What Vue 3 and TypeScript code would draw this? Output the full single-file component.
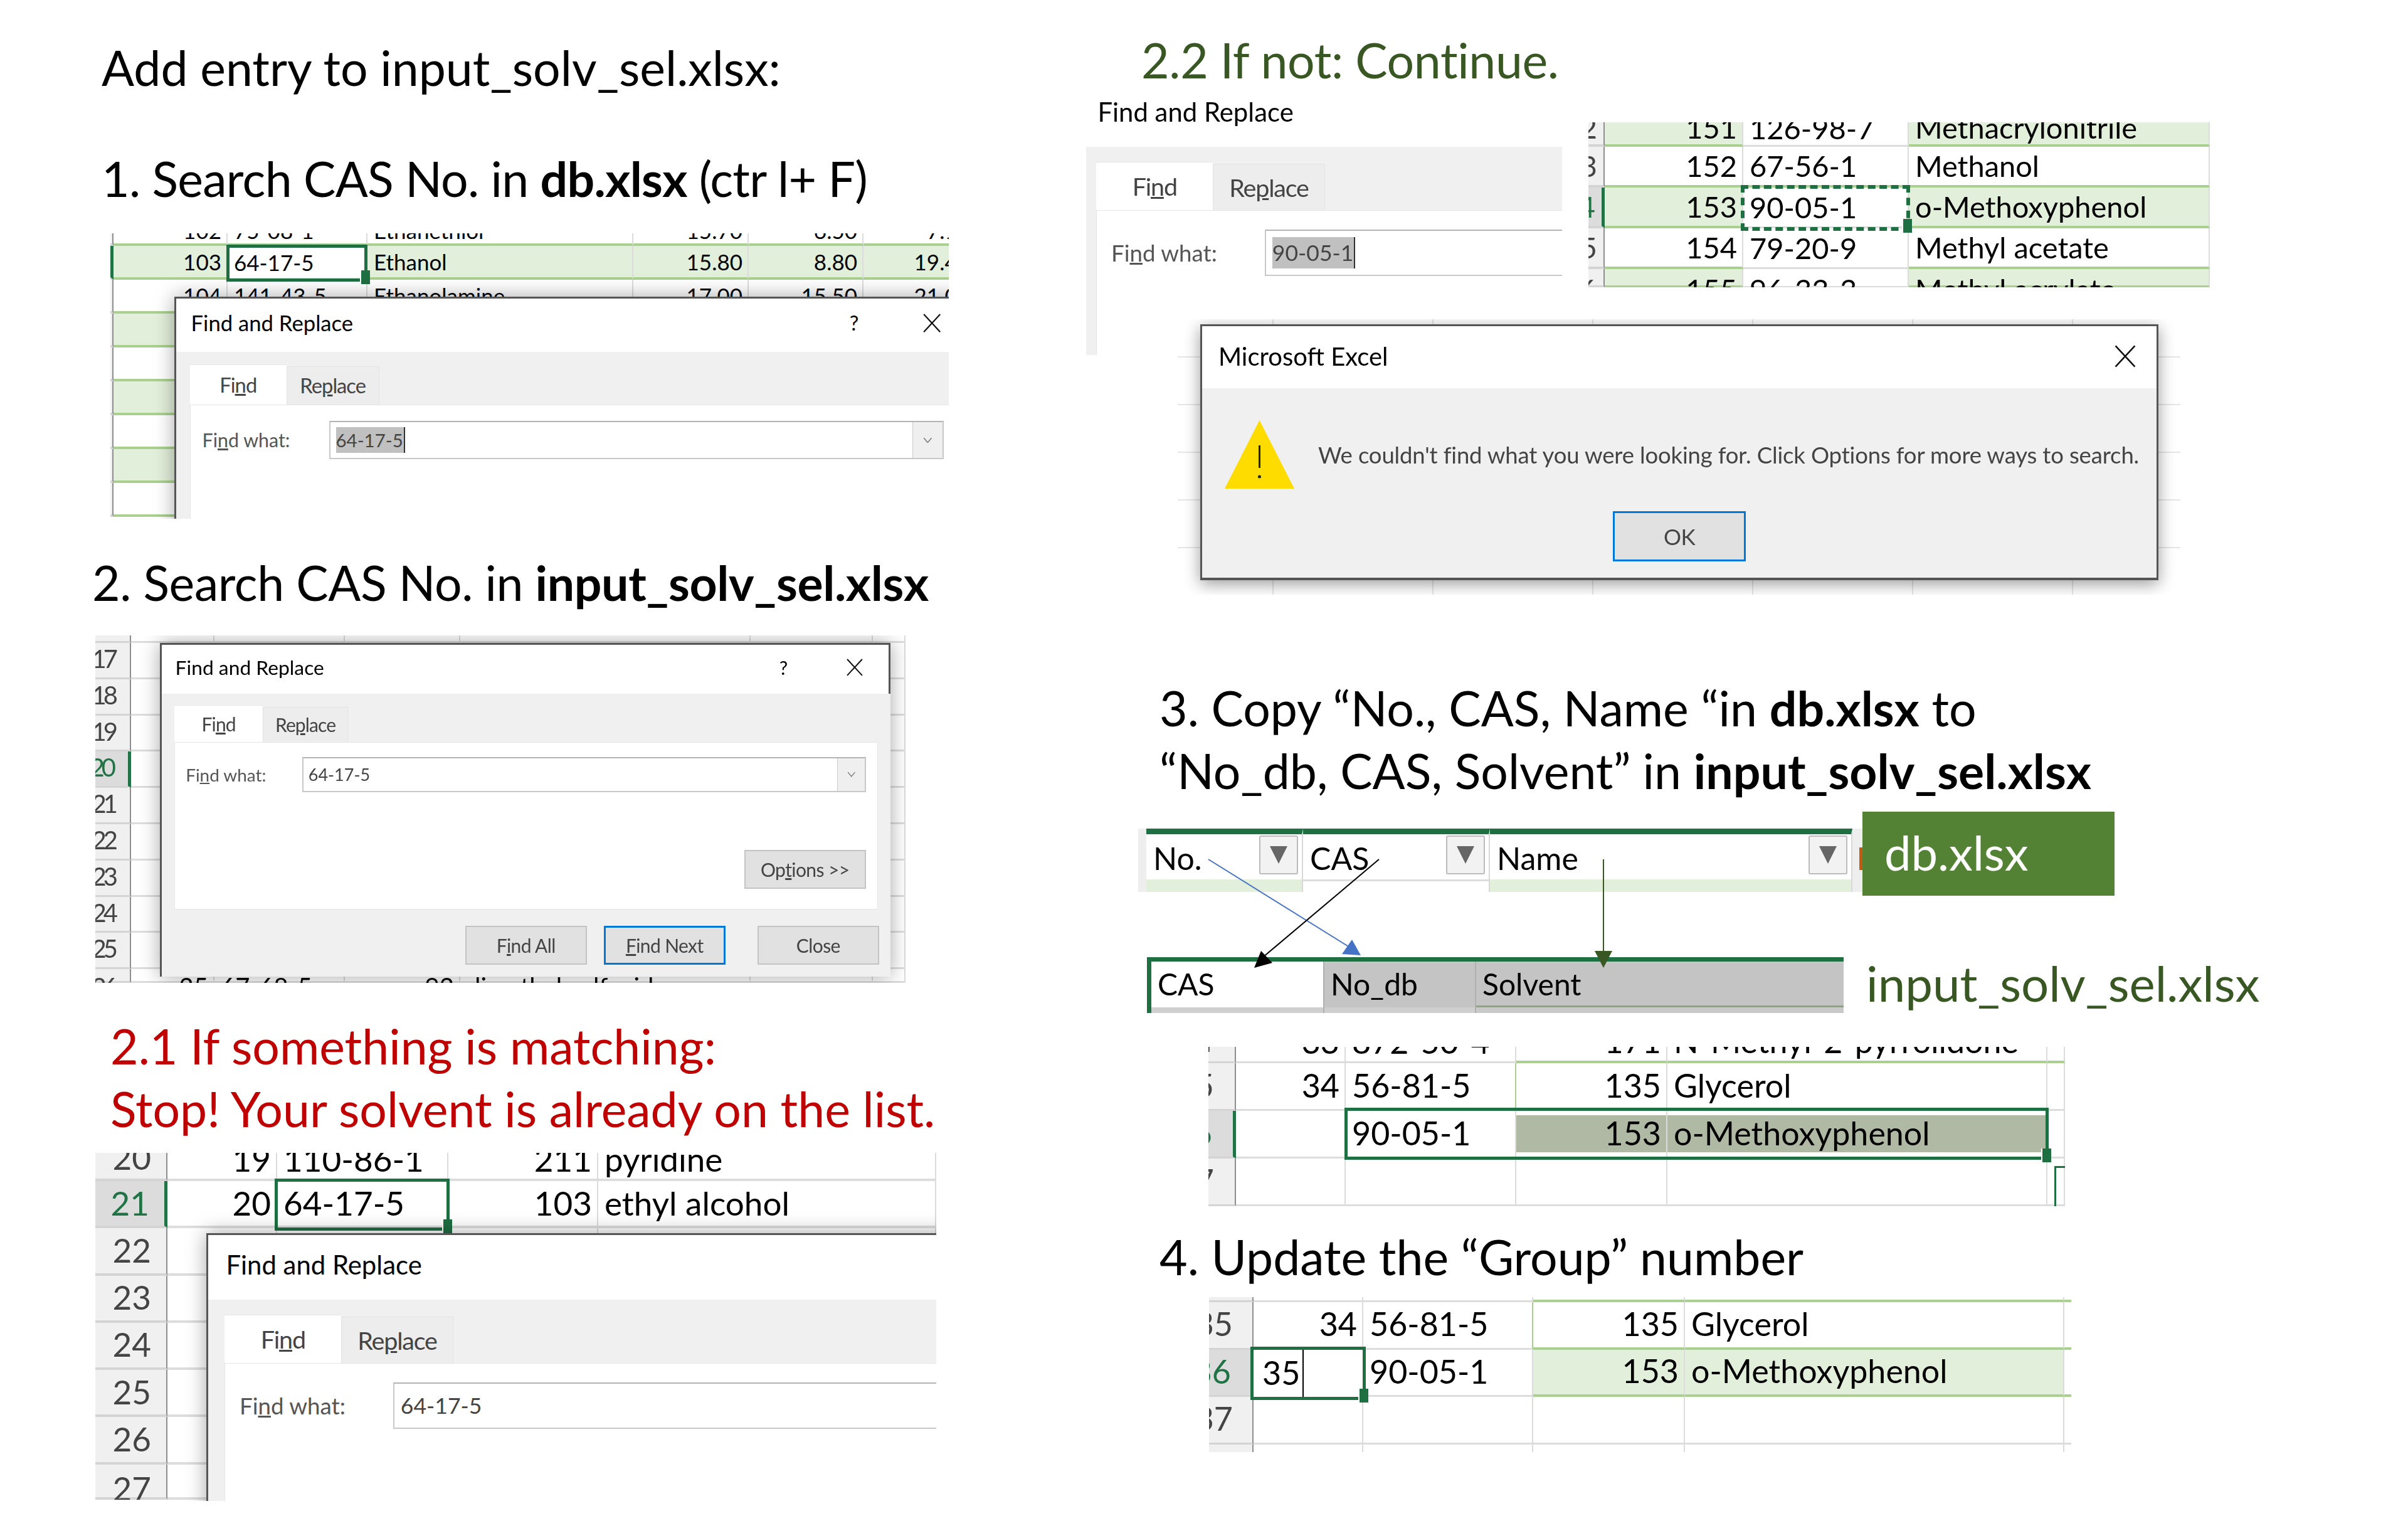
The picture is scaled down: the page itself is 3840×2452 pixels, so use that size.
<template>
  <main class="slide">
    <p class="title t-add">Add entry to input_solv_sel.xlsx:</p>
    <p class="title t-one">1. Search CAS No. in <b>db.xlsx</b> (ctr l+ F)</p>
    <p class="title t-two">2. Search CAS No. in <b>input_solv_sel.xlsx</b></p>
    <p class="title t-match">2.1 If something is matching:<br />Stop! Your solvent is already on the list.</p>
    <p class="title t-cont">2.2 If not: Continue.</p>
    <p class="title t-copy">
      3. Copy “No., CAS, Name “in <b>db.xlsx</b> to<br />“No_db, CAS, Solvent” in
      <b>input_solv_sel.xlsx</b>
    </p>
    <p class="title t-group">4. Update the “Group” number</p>

    <section v-for="s in sheets" :key="s.id" class="shot" :class="s.id">
      <div v-for="(r, i) in s.rows" :key="i" class="row" :class="r.cls">
        <div v-for="(c, j) in r.cells" :key="j" class="cell" :class="{ hdr: j === 0, right: c.right }">
          <span>{{ c.text }}</span>
        </div>
      </div>

      <div v-if="s.frame" class="frame">
        <span v-if="s.typed" class="typed">{{ s.typed }}</span>
      </div>
      <div v-if="s.id === 'h'" class="paste"></div>

      <div v-if="s.find" class="dialog">
        <header class="titlebar">
          <span class="name">Find and Replace</span>
          <span class="help">?</span>
          <svg class="close" viewBox="0 0 28 28"><path d="M2 1 26 27M26 1 2 27" /></svg>
        </header>
        <div class="tabs">
          <span class="tab on">Fi<u>n</u>d</span>
          <span class="tab">Re<u>p</u>lace</span>
        </div>
        <div class="panel">
          <div class="field">
            <label>Fi<u>n</u>d what:</label>
            <div class="input">
              <span class="value" :class="{ sel: s.find.selected }">{{ s.find.value }}</span>
              <span class="drop">
                <svg viewBox="0 0 12 8"><path d="M1 1 6 7 11 1" /></svg>
              </span>
            </div>
          </div>
          <button class="btn options">Op<u>t</u>ions &gt;&gt;</button>
        </div>
        <footer class="actions">
          <button class="btn">F<u>i</u>nd All</button>
          <button class="btn primary"><u>F</u>ind Next</button>
          <button class="btn last">Close</button>
        </footer>
      </div>
    </section>

    <section class="shot alert">
      <div class="alert-box">
        <header class="alert-bar">
          <span>Microsoft Excel</span>
          <svg class="close" viewBox="0 0 28 28"><path d="M2 1 26 27M26 1 2 27" /></svg>
        </header>
        <div class="alert-body">
          <div class="alert-msg">
            <svg class="warn" viewBox="0 0 111 109">
              <polygon points="55.5,0 111,109 0,109" fill="#ffdc00" />
              <path d="M55.5 40V76" stroke="#222" stroke-width="3" />
              <circle cx="55.5" cy="90" r="2.5" fill="#222" />
            </svg>
            <span>We couldn't find what you were looking for. Click Options for more ways to search.</span>
          </div>
          <button class="btn primary ok">OK</button>
        </div>
      </div>
    </section>

    <section class="shot headers">
      <div v-for="h in dbHeaders" :key="h" class="hcell">
        <span>{{ h }}</span>
        <i class="filter"><b></b></i>
      </div>
      <i class="sliver"></i>
    </section>
    <div class="db-tag">db.xlsx</div>

    <section class="shot target">
      <div v-for="h in inputHeaders" :key="h" class="tcell">{{ h }}</div>
    </section>
    <div class="input-tag">input_solv_sel.xlsx</div>

    <svg class="arrows" viewBox="0 0 3840 2452">
      <path d="M1927 1370 2152 1510" stroke="#4472c4" stroke-width="2" />
      <polygon points="2156,1498 2140,1521 2170,1523" fill="#4472c4" />
      <path d="M2199 1370 2014 1526" stroke="#000" stroke-width="2" />
      <polygon points="2011,1516 2000,1543 2029,1535" fill="#000" />
      <path d="M2557 1370V1520" stroke="#385723" stroke-width="2" />
      <polygon points="2543,1516 2571,1516 2557,1543" fill="#385723" />
    </svg>
  </main>
</template>

<script setup lang="ts">
interface Cell {
  text: string
  right: boolean
}

interface Row {
  cls: string
  cells: Cell[]
}

interface Sheet {
  id: string
  rows: Row[]
  frame?: boolean
  typed?: string
  find?: { value: string; selected: boolean }
}

// a leading ">" means right aligned, like numbers in Excel
const row = (cls: string, ...cells: string[]): Row => ({
  cls,
  cells: cells.map((c) => ({ text: c.replace(/^>/, ''), right: c.startsWith('>') })),
})

const blank = (cls: string, n: number, label = '') => row(cls, label ? '>' + label : '', ...Array(n).fill(''))

const sheets: Sheet[] = [
  {
    id: 'a',
    frame: true,
    find: { value: '64-17-5', selected: true },
    rows: [
      row('top', '', '>102', '75-08-1', 'Ethanethiol', '>15.70', '>6.50', '>7.10'),
      row('green skip on', '', '>103', '64-17-5', 'Ethanol', '>15.80', '>8.80', '>19.40'),
      row('', '', '>104', '141-43-5', 'Ethanolamine', '>17.00', '>15.50', '>21.00'),
      blank('green', 6),
      blank('', 6),
      blank('green', 6),
      blank('', 6),
      blank('green', 6),
      blank('', 6),
    ],
  },
  {
    id: 'b',
    find: { value: '64-17-5', selected: false },
    rows: [
      blank('top', 6),
      blank('', 6, '17'),
      blank('', 6, '18'),
      blank('', 6, '19'),
      blank('on', 6, '20'),
      blank('', 6, '21'),
      blank('', 6, '22'),
      blank('', 6, '23'),
      blank('', 6, '24'),
      blank('', 6, '25'),
      row('end', '>26', '>25', '67-68-5', '>92', 'dimethyl sulfoxide', '', ''),
    ],
  },
  {
    id: 'c',
    frame: true,
    find: { value: '64-17-5', selected: false },
    rows: [
      row('top', '>20', '>19', '110-86-1', '>211', 'pyridine'),
      row('on', '>21', '>20', '64-17-5', '>103', 'ethyl alcohol'),
      blank('', 4, '22'),
      blank('', 4, '23'),
      blank('', 4, '24'),
      blank('', 4, '25'),
      blank('', 4, '26'),
      blank('end', 4, '27'),
    ],
  },
  { id: 'd', rows: [], find: { value: '90-05-1', selected: true } },
  {
    id: 'e',
    frame: true,
    rows: [
      row('top green skip', '>152', '>151', '126-98-7', 'Methacrylonitrile'),
      row('', '>153', '>152', '67-56-1', 'Methanol'),
      row('green skip on', '>154', '>153', '90-05-1', 'o-Methoxyphenol'),
      row('skip', '>155', '>154', '79-20-9', 'Methyl acetate'),
      row('end green skip', '>156', '>155', '96-33-3', 'Methyl acrylate'),
    ],
  },
  {
    id: 'h',
    frame: true,
    rows: [
      row('top lime', '>34', '>33', '872-50-4', '>171', 'N-Methyl-2-pyrrolidone', ''),
      row('edge', '>35', '>34', '56-81-5', '>135', 'Glycerol', ''),
      row('on tint', '>36', '', '90-05-1', '>153', 'o-Methoxyphenol', ''),
      blank('', 5, '37'),
    ],
  },
  {
    id: 'i',
    frame: true,
    typed: '35',
    rows: [
      blank('top lime', 5),
      row('lime edge', '>35', '>34', '56-81-5', '>135', 'Glycerol', ''),
      row('on fill', '>36', '', '90-05-1', '>153', 'o-Methoxyphenol', ''),
      blank('', 5, '37'),
      blank('', 5),
    ],
  },
]

const dbHeaders = ['No.', 'CAS', 'Name']
const inputHeaders = ['CAS', 'No_db', 'Solvent']
</script>

<style scoped>
* {
  box-sizing: border-box;
}

.slide {
  position: relative;
  width: 3840px;
  height: 2452px;
  overflow: hidden;
  background: #fff;
  color: #000;
  font-family: Lato, 'Liberation Sans', sans-serif;
}

.title {
  position: absolute;
  margin: 0;
  font-size: 77px;
  line-height: 100px;
  white-space: nowrap;
}

.title b {
  font-weight: 700;
}

.t-add { left: 162px; top: 57px; }
.t-one { left: 162px; top: 234px; letter-spacing: -0.7px; }
.t-two { left: 147px; top: 878px; letter-spacing: -0.37px; }
.t-match { left: 176px; top: 1617px; color: #c00000; }
.t-cont { left: 1820px; top: 45px; color: #385723; letter-spacing: -0.35px; }
.t-copy { left: 1849px; top: 1078px; }
.t-group { left: 1849px; top: 1953px; }

/* pasted screenshots */
.shot {
  position: absolute;
  overflow: hidden;
  background: #fff;
  filter: blur(0.7px);
}

.a { left: 176px; top: 372px; width: 1337px; height: 455px; --cols: 5px 182px 223px 424px 184px 183px 180px; --rh: 54px; --top: 20px; --end: 54px; --fs: 35px; --dfs: 32.7px; --hp: 0px; --pb: 0px; --line: 4px solid #a9d08e; }
.b { left: 152px; top: 1013px; width: 1292px; height: 554px; --cols: 57px 133px 208px 184px 463px 195px 52px; --rh: 57.8px; --top: 12px; --end: 22px; --fs: 40px; --dfs: 30px; --hp: 24px; --pb: 3px; --line: 3px solid #ddd; }
.c { left: 152px; top: 1838px; width: 1341px; height: 555px; --cols: 115px 175px 273px 239px 539px; --rh: 75.3px; --top: 45px; --end: 56px; --fs: 53px; --dfs: 39.5px; --hp: 24px; --pb: 3px; --line: 4px solid #ddd; }
.d { left: 1732px; top: 131px; width: 759px; height: 435px; --dfs: 39.5px; }
.e { left: 2533px; top: 195px; width: 991px; height: 263px; --cols: 26px 221px 264px 480px; --rh: 65px; --top: 39px; --end: 30px; --fs: 47px; --hp: 10px; --pb: 0px; --line: 4px solid #a9d08e; }
.h { left: 1927px; top: 1669px; width: 1366px; height: 254px; --cols: 44px 175px 272px 241px 606px 28px; --rh: 76px; --top: 26px; --end: 76px; --fs: 52px; --hp: 33px; --pb: 3px; --line: 3px solid #ddd; }
.i { left: 1928px; top: 2068px; width: 1375px; height: 247px; --cols: 71px 175px 271px 242px 605px 11px; --rh: 75.5px; --top: 8px; --end: 12px; --fs: 52px; --hp: 31px; --pb: 3px; --line: 3px solid #ddd; }

.row {
  display: grid;
  grid-template-columns: var(--cols);
  grid-template-rows: minmax(0, 1fr);
  height: var(--rh);
  overflow: hidden;
  font-size: var(--fs);
  line-height: var(--rh);
}

.row.top { height: var(--top); }
.row.end { height: var(--end); }

.cell {
  display: flex;
  align-items: center;
  min-width: 0;
  min-height: 0;
  padding: 0 10px var(--pb);
  border-right: 2px solid #dcdcdc;
  border-bottom: var(--line);
  white-space: nowrap;
}

/* rows cut by the edge of the screenshot keep their text where the full row had it */
.top .cell { align-items: flex-end; padding-bottom: 0; }
.top .cell span { margin-bottom: -6px; }
.end .cell { align-items: flex-start; }
.cell.right { justify-content: flex-end; padding-right: 8px; }

.cell.hdr {
  padding: 0 var(--hp) var(--pb) 0;
  background: #f0f0f0;
  border-right: 2px solid #8d8d8d;
  border-bottom-color: #d4d4d4;
  color: #444;
}

.b .cell.hdr { letter-spacing: -5px; }

.on .cell.hdr {
  background: #dcdcdc;
  border-right: 5px solid #217346;
  color: #217346;
}

.green .cell:not(.hdr) { background: #e2efda; }
.skip .cell:nth-child(3) { background: #fff; border-bottom: 3px solid #ddd; }

.lime .cell:nth-child(n + 4),
.fill .cell:nth-child(n + 4) { border-bottom: 4px solid #a9d08e; }
.fill .cell:nth-child(4),
.fill .cell:nth-child(5) { background: #e2efda; }
.edge .cell:nth-child(3) { border-right-color: #a9d08e; }
.tint .cell:nth-child(4),
.tint .cell:nth-child(5) {
  background: #afb9a4;
  box-shadow: inset 0 7px #fff, inset 0 -7px #fff;
}

/* cell selection */
.frame {
  position: absolute;
  border: 5px solid #1e6f42;
}

.frame::after {
  content: '';
  position: absolute;
  right: -9px;
  bottom: -9px;
  width: 14px;
  height: 22px;
  background: #1e6f42;
  border-left: 2px solid #fff;
}

.a .frame { left: 185px; top: 18px; width: 225px; height: 59px; }
.c .frame { left: 286px; top: 41px; width: 279px; height: 83px; }
.e .frame { left: 243px; top: 100px; width: 270px; height: 73px; border: 6px dashed #1e6f42; }
.h .frame { left: 217px; top: 97px; width: 1123px; height: 83px; }
.i .frame { left: 66px; top: 79px; width: 184px; height: 85px; background: #fff; }

.typed {
  display: block;
  width: 80px;
  height: 100%;
  padding-left: 14px;
  border-right: 2px solid #000;
  font-size: 52px;
  line-height: 72px;
}

.paste {
  position: absolute;
  left: 1349px;
  top: 190px;
  width: 20px;
  height: 70px;
  border-left: 3px solid #1e6f42;
  border-top: 3px solid #1e6f42;
}

/* find and replace window */
.dialog {
  position: absolute;
  display: flex;
  flex-direction: column;
  width: 38.83em;
  height: 17.73em;
  background: #f0f0f0;
  border-top: 3px solid #555;
  border-left: 3px solid #555;
  box-shadow: 0 0 30px rgba(0, 0, 0, 0.35);
  font-size: var(--dfs);
  color: #444;
}

.a .dialog { left: 102px; top: 101px; }
.b .dialog { left: 103px; top: 12px; }
.c .dialog { left: 177px; top: 128px; }
.d .dialog { left: -10px; top: 0; border: 0; box-shadow: none; }

.titlebar {
  display: flex;
  flex: none;
  align-items: center;
  height: 2.6em;
  padding: 0 1.33em 0.22em 0.72em;
  background: #fff;
  border-right: 3px solid #555;
  color: #000;
}

.d .titlebar { border: 0; }

.name { flex: 1; font-size: 1.06em; }
.help { margin-right: 3.1em; }

.close {
  width: 0.93em;
  height: 0.93em;
  fill: none;
  stroke: #111;
  stroke-width: 2;
}

.tabs {
  display: flex;
  flex: none;
  align-items: flex-end;
  height: 2.56em;
  padding-left: 0.67em;
}

.tab {
  display: flex;
  align-items: center;
  justify-content: center;
  width: 4.53em;
  height: 1.87em;
  background: #ededed;
  border: 1px solid #e3e3e3;
  border-bottom: 0;
  letter-spacing: -0.03em;
}

.tab.on {
  width: 4.7em;
  height: 1.93em;
  background: #fff;
  border: 0;
  box-shadow: 0 -1px 0 #e5e5e5;
}

.panel {
  display: flex;
  flex: none;
  flex-direction: column;
  justify-content: space-between;
  height: 8.9em;
  margin: 0 0.67em;
  padding: 0.77em 0.6em 1.05em 0.57em;
  background: #fff;
  border: 1px solid #e5e5e5;
}

.field {
  display: flex;
  align-items: center;
}

.field label {
  flex: none;
  width: 6.67em;
  color: #555;
  font-size: 0.93em;
}

.input {
  display: flex;
  flex: 1;
  align-items: center;
  justify-content: space-between;
  height: 1.87em;
  padding-left: 0.25em;
  border: 2px solid #c8c8c8;
  border-top-color: #b4b4b4;
  background: #fff;
}

.value {
  padding-right: 1px;
  font-size: 0.9em;
  line-height: 1.4em;
}

.value.sel {
  background: #c0c0c0;
  border-right: 2px solid #333;
}

.drop {
  display: flex;
  align-items: center;
  justify-content: center;
  width: 1.47em;
  height: 100%;
  background: #efefef;
  border-left: 1px solid #ccc;
}

.drop svg {
  width: 0.45em;
  fill: none;
  stroke: #777;
  stroke-width: 1.2;
}

.btn {
  width: 6.47em;
  height: 2.07em;
  padding: 0;
  background: #e1e1e1;
  border: 2px solid #c4c4c4;
  color: #444;
  font: inherit;
  letter-spacing: -0.02em;
}

.btn.primary { border: 3px solid #0078d7; }
.options { align-self: flex-end; }

.actions {
  display: flex;
  justify-content: flex-end;
  gap: 0.9em;
  margin-top: 0.87em;
  padding-right: 0.6em;
}

.actions .last { margin-left: 0.8em; }

/* excel message box */
.alert {
  left: 1878px;
  top: 509px;
  width: 1599px;
  height: 439px;
  background-color: #fff;
  background-image:
    repeating-linear-gradient(90deg, transparent 0 151px, #e6e6e6 151px 153px, transparent 153px 255px),
    repeating-linear-gradient(0deg, transparent 0 74px, #e6e6e6 74px 76px);
}

.alert-box {
  position: absolute;
  left: 36px;
  top: 8px;
  display: flex;
  flex-direction: column;
  width: 1528px;
  height: 408px;
  background: #f0f0f0;
  border: 3px solid #555;
  border-bottom-width: 4px;
  box-shadow: 0 6px 24px rgba(0, 0, 0, 0.4);
}

.alert-bar {
  display: flex;
  flex: none;
  align-items: center;
  justify-content: space-between;
  height: 99px;
  padding: 0 32px 4px 26px;
  background: #fff;
  font-size: 40px;
}

.alert-bar .close {
  width: 36px;
  height: 36px;
}

.alert-body {
  display: flex;
  flex: 1;
  flex-direction: column;
  align-items: center;
  padding-top: 51px;
}

.alert-msg {
  display: flex;
  align-items: center;
  gap: 38px;
  align-self: flex-start;
  padding-left: 36px;
  color: #444;
  font-size: 36.5px;
  letter-spacing: -0.15px;
  white-space: nowrap;
}

.warn {
  width: 111px;
  height: 109px;
  flex: none;
}

.ok {
  width: 212px;
  height: 80px;
  margin-top: 36px;
  font-size: 35px;
}

/* db.xlsx header row */
.headers {
  left: 1815px;
  top: 1321px;
  display: grid;
  grid-template-columns: 250px 298px 578px;
  width: 1155px;
  height: 101px;
  padding-left: 13px;
  background: #eee;
}

.hcell {
  display: flex;
  align-items: flex-start;
  justify-content: space-between;
  padding: 3px 6px 0 11px;
  border-top: 9px solid #1e6f42;
  border-right: 2px solid #d8d8d8;
  background: #fff;
  box-shadow: inset 0 -20px #e2efda;
  font-size: 50px;
  line-height: 70px;
}

.hcell:nth-child(2) { box-shadow: inset 0 -17px #fff, inset 0 -20px #ddd; }

.filter {
  display: flex;
  align-items: center;
  justify-content: center;
  width: 62px;
  height: 62px;
  margin-top: -1px;
  background: #f2f2f2;
  border: 2px solid #bcbcbc;
  border-radius: 3px;
}

.filter b {
  width: 28px;
  height: 28px;
  background: #666;
  clip-path: polygon(0 0, 100% 0, 50% 100%);
}

.sliver {
  position: absolute;
  right: 0;
  top: 30px;
  width: 5px;
  height: 36px;
  background: #c55a11;
}

.db-tag {
  position: absolute;
  left: 2970px;
  top: 1294px;
  width: 402px;
  height: 134px;
  padding-left: 35px;
  background: #548235;
  color: #fff;
  font-size: 76px;
  line-height: 130px;
}

/* input_solv_sel.xlsx header row */
.target {
  left: 1829px;
  top: 1526px;
  display: grid;
  grid-template-columns: 276px 242px 593px;
  width: 1111px;
  height: 89px;
  border-top: 7px solid #1e6f42;
  border-left: 7px solid #1e6f42;
}

.tcell {
  padding: 4px 0 0 10px;
  background: #c4c4c4;
  border-right: 2px solid #b0b0b0;
  box-shadow: inset 0 -9px #cfcfcf;
  font-size: 48px;
  line-height: 64px;
}

.tcell:first-child { background: #fff; }
.tcell:last-child { box-shadow: inset 0 -9px #c9c9c9, inset 0 -12px #8fa37c; }

.input-tag {
  position: absolute;
  left: 2976px;
  top: 1517px;
  color: #385723;
  font-size: 78px;
  line-height: 100px;
}

.arrows {
  position: absolute;
  left: 0;
  top: 0;
  width: 3840px;
  height: 2452px;
  pointer-events: none;
}
</style>

<style>
html,
body {
  margin: 0;
  background: #fff;
}
</style>
